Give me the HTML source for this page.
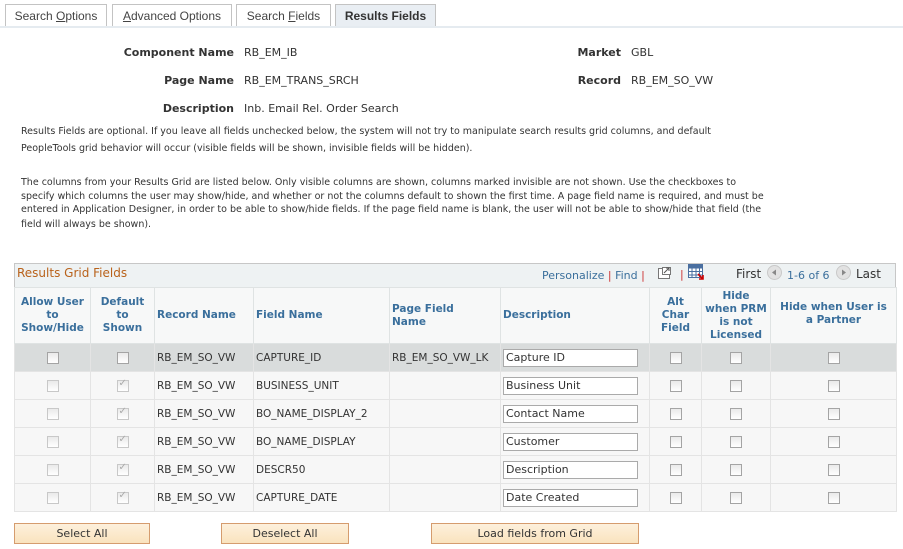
<!DOCTYPE html>
<html><head><meta charset="utf-8"><style>
*{margin:0;padding:0;box-sizing:border-box}
body{width:903px;height:549px;background:#fff;position:relative;overflow:hidden;font-family:"DejaVu Sans","Liberation Sans",sans-serif;color:#333}
.a{position:absolute;white-space:nowrap}
.tab{position:absolute;top:4px;height:22px;border:1px solid #c3c3c3;border-bottom:none;background:#fff;font:12px "Liberation Sans",sans-serif;color:#444;text-align:center;line-height:22px}
.lbl{font-weight:bold;font-size:11px;color:#333;text-align:right}
.val{font-size:11px;color:#333}
.p{font-size:9.5px;color:#333;line-height:16px}
.grid{position:absolute;left:14px;top:263px;width:882px;height:249px;border:1px solid #c7c7c7;background:#f7f7f7}
table{position:absolute;left:14px;top:287px;border-collapse:collapse;font-size:11px;table-layout:fixed;width:882px}
th{color:#3a6f9c;font-size:10.5px;font-weight:bold;background:#f7f8f8;border:1px solid #dfe3e3;text-align:left;padding:0 2px;line-height:13px;height:56px;vertical-align:middle;white-space:nowrap;overflow:hidden}
th.c{text-align:center}
td{border:1px solid #e4e4e4;height:28px;padding:0 2px;color:#333;background:#f7f7f7;white-space:nowrap;overflow:hidden;font-size:10.5px}
tr.s td{background:#d9dcdc}
td.c{text-align:center}
.cb{display:inline-block;width:12px;height:12px;border:1px solid #a4a4a4;background:linear-gradient(#eaeaea,#fff);vertical-align:middle;position:relative}
.cb.ck::after{content:"✓";position:absolute;left:1px;top:-3px;font-size:10px;color:#aaa}
.cb.d{border-color:#c8c8c8}
.in{display:inline-block;width:135px;height:18px;border:1px solid #aaa;background:#fff;padding-left:2px;line-height:16px;font-size:11px;vertical-align:middle}
.btn{position:absolute;top:523px;height:21px;border:1px solid #d59c6e;background:linear-gradient(#fdf0dc,#fae3be);font:11px "DejaVu Sans",sans-serif;color:#333;text-align:center;line-height:19px}
</style></head><body>
<div class="tab" style="left:5px;width:102px">Search <u>O</u>ptions</div>
<div class="tab" style="left:112px;width:120px"><u>A</u>dvanced Options</div>
<div class="tab" style="left:236px;width:95px">Search <u>F</u>ields</div>
<div class="tab" style="left:335px;width:101px;background:#e9eef3;font-weight:bold;color:#333;height:23px">Results Fields</div>
<div class="a" style="left:0;top:26px;width:903px;height:2px;background:#e5ebf0"></div>

<div class="a lbl" style="left:80px;width:154px;top:46px">Component Name</div><div class="a val" style="left:244px;top:46px">RB_EM_IB</div>
<div class="a lbl" style="left:80px;width:154px;top:74px">Page Name</div><div class="a val" style="left:244px;top:74px">RB_EM_TRANS_SRCH</div>
<div class="a lbl" style="left:80px;width:154px;top:102px">Description</div><div class="a val" style="left:244px;top:102px">Inb. Email Rel. Order Search</div>
<div class="a lbl" style="left:520px;width:101px;top:46px">Market</div><div class="a val" style="left:631px;top:46px">GBL</div>
<div class="a lbl" style="left:520px;width:101px;top:74px">Record</div><div class="a val" style="left:631px;top:74px">RB_EM_SO_VW</div>

<div class="a p" style="left:21px;top:124px">Results Fields are optional. If you leave all fields unchecked below, the system will not try to manipulate search results grid columns, and default</div>
<div class="a p" style="left:21px;top:141px">PeopleTools grid behavior will occur (visible fields will be shown, invisible fields will be hidden).</div>
<div class="a p" style="left:21px;top:176px;line-height:13.5px">The columns from your Results Grid are listed below. Only visible columns are shown, columns marked invisible are not shown. Use the checkboxes to<br>specify which columns the user may show/hide, and whether or not the columns default to shown the first time. A page field name is required, and must be<br>entered in Application Designer, in order to be able to show/hide fields. If the page field name is blank, the user will not be able to show/hide that field (the</div>
<div class="a p" style="left:21px;top:217px">field will always be shown).</div>

<div class="grid"></div>
<div class="a" style="left:15px;top:264px;width:880px;height:23px;background:#eef2f3"></div>
<div class="a" style="left:17px;top:266px;font-size:12px;color:#b9621b">Results Grid Fields</div>
<div class="a" style="left:542px;top:269px;font-size:11px;color:#3a6f9c">Personalize <span style="color:#c33">|</span> Find <span style="color:#c33">|</span></div>
<svg class="a" style="left:657px;top:266px" width="16" height="14"><rect x="1.5" y="2.5" width="11" height="10" fill="#fff" stroke="#777"/><rect x="5.5" y="1.5" width="8" height="7" fill="#fff" stroke="#777"/><path d="M7 7l5-5M9 2h3v3" stroke="#555" fill="none"/></svg>
<div class="a" style="left:680px;top:268px;font-size:11px;color:#c33">|</div>
<svg class="a" style="left:688px;top:264px" width="18" height="16"><rect x="0.5" y="0.5" width="14" height="13" fill="#fff" stroke="#4a6fa0"/><path d="M0 4h15M0 7.5h15M0 11h15M4 0v14M8 0v14M11.5 0v14" stroke="#4a6fa0"/><rect x="0.5" y="0.5" width="14" height="3" fill="#4a6fa0"/><path d="M10 10l5 5M15 11v4h-4" stroke="#c00" stroke-width="1.6" fill="none"/></svg>
<div class="a" style="left:736px;top:267px;font-size:12px;color:#333">First</div>
<svg class="a" style="left:767px;top:265px" width="15" height="15"><circle cx="7.5" cy="7.5" r="7" fill="#e2e2e2" stroke="#c9c9c9"/><path d="M9 4.5v6l-4-3z" fill="#888"/></svg>
<div class="a" style="left:787px;top:269px;font-size:11px;color:#3a6f9c">1-6 of 6</div>
<svg class="a" style="left:836px;top:265px" width="15" height="15"><circle cx="7.5" cy="7.5" r="7" fill="#e2e2e2" stroke="#c9c9c9"/><path d="M6 4.5v6l4-3z" fill="#888"/></svg>
<div class="a" style="left:856px;top:267px;font-size:12px;color:#333">Last</div>

<table>
<colgroup><col style="width:76px"><col style="width:64px"><col style="width:99px"><col style="width:136px"><col style="width:111px"><col style="width:149px"><col style="width:52px"><col style="width:69px"><col style="width:126px"></colgroup>
<tr><th class="c">Allow User<br>to<br>Show/Hide</th><th class="c">Default<br>to<br>Shown</th><th>Record Name</th><th>Field Name</th><th>Page Field<br>Name</th><th>Description</th><th class="c">Alt<br>Char<br>Field</th><th class="c">Hide<br>when PRM<br>is not<br>Licensed</th><th class="c" style="vertical-align:top;padding-top:13px">Hide when User is<br>a Partner</th></tr>
<tr class="s"><td class="c"><span class="cb"></span></td><td class="c"><span class="cb"></span></td><td>RB_EM_SO_VW</td><td>CAPTURE_ID</td><td>RB_EM_SO_VW_LK</td><td><span class="in">Capture ID</span></td><td class="c"><span class="cb"></span></td><td class="c"><span class="cb"></span></td><td class="c"><span class="cb"></span></td></tr>
<tr><td class="c"><span class="cb d"></span></td><td class="c"><span class="cb d ck"></span></td><td>RB_EM_SO_VW</td><td>BUSINESS_UNIT</td><td></td><td><span class="in">Business Unit</span></td><td class="c"><span class="cb"></span></td><td class="c"><span class="cb"></span></td><td class="c"><span class="cb"></span></td></tr>
<tr><td class="c"><span class="cb d"></span></td><td class="c"><span class="cb d ck"></span></td><td>RB_EM_SO_VW</td><td>BO_NAME_DISPLAY_2</td><td></td><td><span class="in">Contact Name</span></td><td class="c"><span class="cb"></span></td><td class="c"><span class="cb"></span></td><td class="c"><span class="cb"></span></td></tr>
<tr><td class="c"><span class="cb d"></span></td><td class="c"><span class="cb d ck"></span></td><td>RB_EM_SO_VW</td><td>BO_NAME_DISPLAY</td><td></td><td><span class="in">Customer</span></td><td class="c"><span class="cb"></span></td><td class="c"><span class="cb"></span></td><td class="c"><span class="cb"></span></td></tr>
<tr><td class="c"><span class="cb d"></span></td><td class="c"><span class="cb d ck"></span></td><td>RB_EM_SO_VW</td><td>DESCR50</td><td></td><td><span class="in">Description</span></td><td class="c"><span class="cb"></span></td><td class="c"><span class="cb"></span></td><td class="c"><span class="cb"></span></td></tr>
<tr><td class="c"><span class="cb d"></span></td><td class="c"><span class="cb d ck"></span></td><td>RB_EM_SO_VW</td><td>CAPTURE_DATE</td><td></td><td><span class="in">Date Created</span></td><td class="c"><span class="cb"></span></td><td class="c"><span class="cb"></span></td><td class="c"><span class="cb"></span></td></tr>
</table>

<div class="btn" style="left:14px;width:136px">Select All</div>
<div class="btn" style="left:221px;width:128px">Deselect All</div>
<div class="btn" style="left:431px;width:208px">Load fields from Grid</div>
</body></html>
